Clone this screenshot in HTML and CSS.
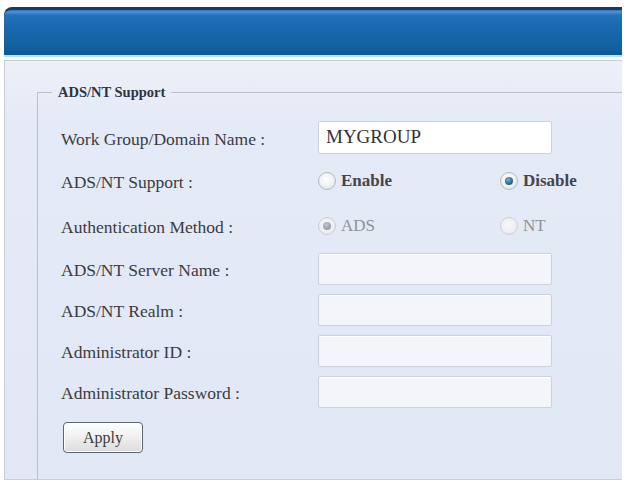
FILE: index.html
```html
<!DOCTYPE html>
<html lang="en">
<head>
<meta charset="utf-8">
<title>ADS/NT Support</title>
<link rel="stylesheet" href="styles.css">
</head>
<body>
<div class="app">
  <div class="header"></div>
  <div class="panel">
    <fieldset class="group">
      <legend class="group-title">ADS/NT Support</legend>
      <div class="form">
        <div class="label">Work Group/Domain Name :</div>
        <div class="field"><div class="input filled">MYGROUP</div></div>

        <div class="label">ADS/NT Support :</div>
        <div class="field options">
          <span class="option"><span class="radio"></span><span class="opt-text strong">Enable</span></span>
          <span class="option"><span class="radio checked"></span><span class="opt-text strong">Disable</span></span>
        </div>

        <div class="label">Authentication Method :</div>
        <div class="field options disabled">
          <span class="option"><span class="radio checked"></span><span class="opt-text">ADS</span></span>
          <span class="option"><span class="radio"></span><span class="opt-text">NT</span></span>
        </div>

        <div class="label">ADS/NT Server Name :</div>
        <div class="field"><div class="input"></div></div>

        <div class="label">ADS/NT Realm :</div>
        <div class="field"><div class="input"></div></div>

        <div class="label">Administrator ID :</div>
        <div class="field"><div class="input"></div></div>

        <div class="label">Administrator Password :</div>
        <div class="field"><div class="input"></div></div>
      </div>
      <button class="button" type="button">Apply</button>
    </fieldset>
  </div>
</div>
</body>
</html>
```

FILE: styles.css
```css
html, body {
  margin: 0;
  padding: 0;
  background: #ffffff;
}

body {
  font-family: "Liberation Serif", "Times New Roman", serif;
  color: #3a3c40;
}

.app {
  width: 618px;
  padding: 7px 4px 0 4px;
}

/* blue title bar */
.header {
  height: 45px;
  border-top: 3px solid #17386a;
  border-bottom: 2px solid #b5e2f5;
  border-radius: 8px 0 0 0;
  background: linear-gradient(to bottom,
    #2a78c0 0px, #4b93d3 2px, #2472bb 5px, #1a69b0 16px, #12619f 36px, #0d5793 45px);
}

.panel {
  margin-top: 3px;
  height: 420px;
  background: linear-gradient(to bottom, #edf0f8 0px, #e5eaf7 60px, #e2e7f6 100%);
  border: 1px solid #c7ccd6;
  border-right: none;
  padding: 23px 0 0 32px;
  box-sizing: border-box;
  display: flex;
}

.group {
  flex: 1;
  margin: 0;
  padding: 0 0 0 23px;
  border: 1px solid #b9bfcb;
  border-right: none;
  border-bottom: none;
  min-width: 0;
}

.group-title {
  padding: 0 6px;
  margin-left: -9px;
  font-size: 14.5px;
  font-weight: bold;
  color: #2c3446;
}

.form {
  margin-top: 20px;
  display: grid;
  grid-template-columns: 257px 234px;
  grid-template-rows: 33px 35px 37px 32px 32px 32px 32px;
  row-gap: 9px;
  align-items: center;
}

.label {
  font-size: 17.5px;
  color: #3a3c40;
  white-space: nowrap;
  padding-top: 3px;
}

.field {
  height: 100%;
  display: flex;
  align-items: center;
}

.input {
  width: 100%;
  height: 100%;
  box-sizing: border-box;
  background: #f3f5fb;
  border: 1px solid #cdd1da;
  border-radius: 2px;
  box-shadow: inset 0 1px 0 #ffffff;
  font-size: 19px;
  color: #333333;
  padding: 4px 7px;
  line-height: 22px;
}

.input.filled {
  background: #ffffff;
}

.options {
  display: grid;
  grid-template-columns: 182px auto;
}

.option {
  display: flex;
  align-items: center;
  gap: 5px;
}

.opt-text {
  font-size: 17px;
  color: #3a3c40;
}

.opt-text.strong {
  font-weight: bold;
  color: #43464b;
}

.radio {
  width: 16px;
  height: 16px;
  border-radius: 50%;
  border: 1px solid #b4b8be;
  background: radial-gradient(circle at 45% 40%, #ffffff 0%, #f2f3f5 45%, #d9dce0 100%);
  box-shadow: 0 0 1px #ffffff;
  position: relative;
  flex: none;
}

.radio.checked::after {
  content: "";
  position: absolute;
  left: 4px;
  top: 4px;
  width: 8px;
  height: 8px;
  border-radius: 50%;
  background: radial-gradient(circle at 40% 35%, #7fb2c9 0%, #2e6b88 55%, #173f55 100%);
}

.disabled .radio {
  border-color: #c9ccd2;
  background: radial-gradient(circle at 45% 40%, #f7f8fa 0%, #eceef2 60%, #dcdfe4 100%);
}

.disabled .radio.checked::after {
  background: radial-gradient(circle at 40% 35%, #c3c8cf 0%, #9aa1aa 60%, #8a919b 100%);
}

.disabled .opt-text {
  color: #8e9399;
}

.button {
  margin: 14px 0 0 2px;
  width: 80px;
  height: 31px;
  font-family: "Liberation Serif", "Times New Roman", serif;
  font-size: 16px;
  color: #3a3c40;
  border: 1px solid #5d6570;
  border-radius: 4px;
  background: linear-gradient(to bottom, #ffffff 0%, #f1f1f1 45%, #dcdcdc 100%);
  box-shadow: inset 0 0 0 1px #ffffff;
  padding: 0;
}
```
